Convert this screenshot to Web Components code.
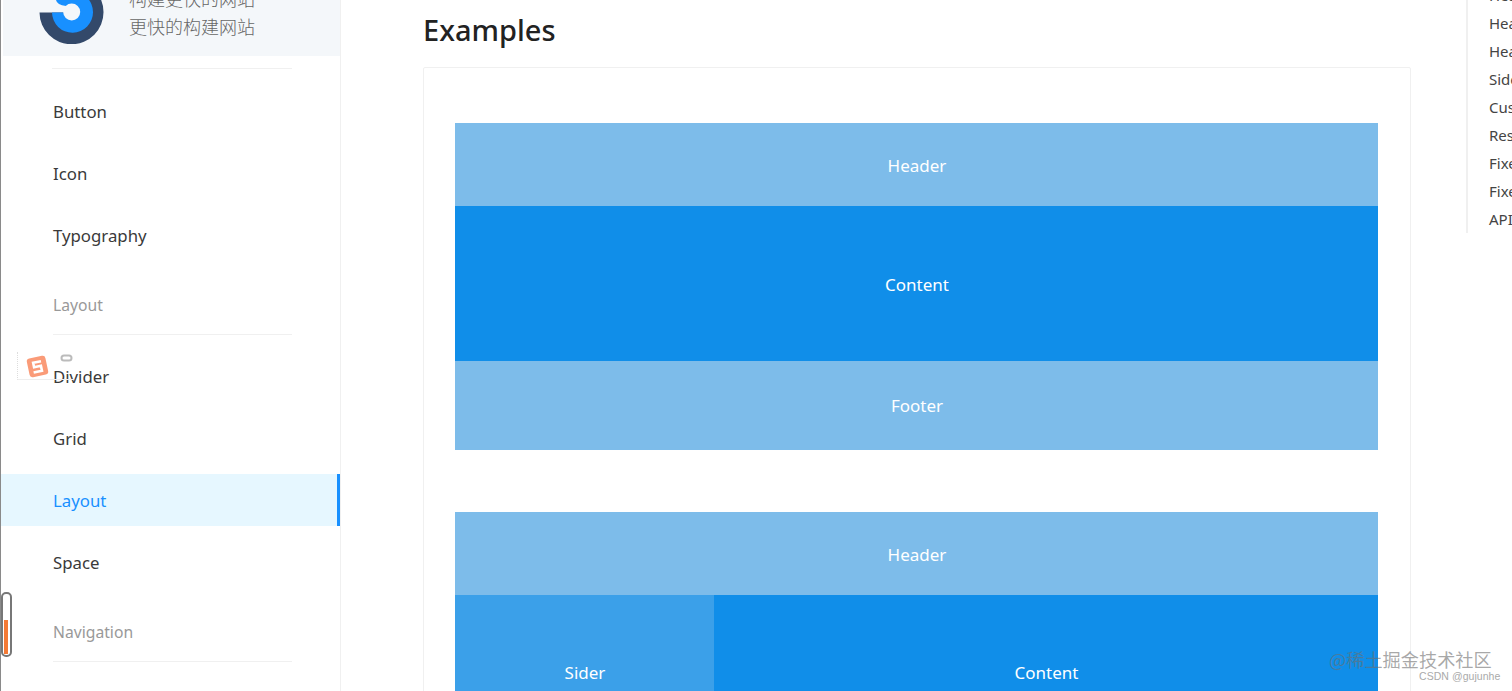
<!DOCTYPE html>
<html>
<head>
<meta charset="utf-8">
<title>Layout</title>
<style>
  html, body { margin: 0; height: 100%; overflow: hidden; background: #fff; }
  body { font-family: "Noto Sans", "Noto Sans CJK SC", sans-serif; }
</style>
</head>
<body>
<docs-page>
  <side-nav slot="nav">
    <nav-logo></nav-logo>
    <nav-item style="margin-top:17px">Button</nav-item>
    <nav-item>Icon</nav-item>
    <nav-item>Typography</nav-item>
    <nav-group>Layout</nav-group>
    <nav-item>Divider</nav-item>
    <nav-item>Grid</nav-item>
    <nav-item active>Layout</nav-item>
    <nav-item>Space</nav-item>
    <nav-group>Navigation</nav-group>
  </side-nav>
  <doc-main slot="main">
    <demo-layout>
      <demo-bar kind="light" h="83">Header</demo-bar>
      <demo-bar kind="dark" h="155">Content</demo-bar>
      <demo-bar kind="light" h="89" style="padding-top:0">Footer</demo-bar>
    </demo-layout>
    <demo-layout style="margin-top:62px">
      <demo-bar kind="light" h="83">Header</demo-bar>
      <demo-row>
        <demo-bar kind="mid" h="155" style="width:259px;padding-top:0">Sider</demo-bar>
        <demo-bar kind="dark" h="155" style="flex:1;padding-top:0">Content</demo-bar>
      </demo-row>
    </demo-layout>
  </doc-main>
  <anchor-rail slot="rail">
    <a-link>Header</a-link>
    <a-link>Header-Sider</a-link>
    <a-link>Header-Content</a-link>
    <a-link>Sider</a-link>
    <a-link>Custom</a-link>
    <a-link>Responsive</a-link>
    <a-link>Fixed</a-link>
    <a-link>Fixed-Sider</a-link>
    <a-link>API</a-link>
  </anchor-rail>
  <ime-widget slot="over"></ime-widget>
  <scroll-pill slot="over"></scroll-pill>
  <water-marks slot="over"></water-marks>
</docs-page>

<script>
function def(name, html, init) {
  customElements.define(name, class extends HTMLElement {
    constructor() {
      super();
      this.attachShadow({mode: 'open'});
      this.shadowRoot.innerHTML = html;
    }
    connectedCallback() { if (init) init(this); }
  });
}

def('docs-page', `
  <style>
    :host { display: block; position: relative; width: 1512px; height: 691px; overflow: hidden; }
    .row { display: flex; height: 100%; }
  </style>
  <div class="row">
    <slot name="nav"></slot>
    <slot name="main"></slot>
    <slot name="rail"></slot>
  </div>
  <slot name="over"></slot>
`);

def('side-nav', `
  <style>
    :host {
      display: block; box-sizing: border-box; width: 341px; height: 691px; flex: none;
      border-left: 1px solid #8a8a8a; border-right: 1px solid #f0f0f0;
      overflow: hidden;
    }
  </style>
  <slot></slot>
`);

def('nav-logo', `
  <style>
    :host { display: block; }
    .band {
      display: flex; height: 56px; margin-left: 2px; background: #f4f7fa; overflow: hidden;
    }
    svg { flex: none; margin: -24px 0 0 35px; }
    .txt {
      margin: -16px 0 0 23px; font-size: 18px; line-height: 28px; color: #666;
      font-family: "Noto Sans CJK SC", sans-serif; font-weight: 300;
    }
    hr { height: 1px; border: 0; margin: 12px 48px 0 51px; background: #f0f0f0; }
  </style>
  <div class="band">
    <svg width="68" height="68" viewBox="38 -24 68 68">
      <path d="M39.5 12.5 A32 32 0 0 0 103.5 12 A32 32 0 0 0 71.5 -20 V12.5 Z" fill="#33496a"/>
      <path d="M52 12.5 A20.5 20.5 0 0 0 93 12 A20.5 20.5 0 0 0 72.5 -8.5 H56 V0 Q57 5 66 6 V12.5 Z" fill="#1890ff"/>
      <circle cx="71.7" cy="12" r="8.5" fill="#f4f7fa"/>
    </svg>
    <div class="txt">构建更快的网站<br>更快的构建网站</div>
  </div>
  <hr>
`);

def('nav-item', `
  <style>
    :host {
      display: flex; align-items: center; box-sizing: border-box; height: 52px; margin-bottom: 10px;
      padding: 0 0 2px 52px; font-size: 16.8px; color: #3a3a3a; border-right: 3px solid transparent;
    }
    :host([active]) {
      margin: -1px 0 11px; padding-bottom: 0;
      background: #e6f7ff; color: #1890ff; border-right-color: #1890ff;
    }
  </style>
  <slot></slot>
`);

def('nav-group', `
  <style>
    :host {
      display: block; box-sizing: border-box; height: 63px; margin: 0 48px 16px 52px;
      padding-top: 22px; line-height: 22px; font-size: 15.7px; color: #999;
      border-bottom: 1px solid #f0f0f0;
    }
  </style>
  <slot></slot>
`);

def('doc-main', `
  <style>
    :host { display: block; width: 988px; flex: none; margin-left: 82px; }
    h2 { margin: 0; height: 67px; box-sizing: border-box; padding-top: 8px; line-height: 44px;
         font-size: 29px; font-weight: 500; color: #222; }
    .box { border: 1px solid #f0f0f0; border-radius: 2px; padding: 55px 32px 0 31px; height: 700px; }
  </style>
  <h2>Examples</h2>
  <div class="box"><slot></slot></div>
`);

def('demo-layout', `
  <style>:host { display: block; }</style>
  <slot></slot>
`);

def('demo-row', `
  <style>:host { display: flex; }</style>
  <slot></slot>
`);

def('demo-bar', `
  <style>
    :host {
      display: flex; align-items: center; justify-content: center; box-sizing: border-box;
      padding: 1px 0 0 1px; color: #fff; font-size: 17px; background: #108ee9;
    }
    :host([kind=light]) { background: #7dbcea; }
    :host([kind=mid]) { background: #3ba0e9; }
  </style>
  <slot></slot>
`, el => { el.style.height = el.getAttribute('h') + 'px'; });

def('anchor-rail', `
  <style>
    :host {
      display: block; box-sizing: border-box; flex: none; width: 200px; height: 263px;
      margin: -30px 0 0 55px; padding: 11px 0 0 21px; border-left: 2px solid #f0f0f0;
    }
  </style>
  <slot></slot>
`);

def('a-link', `
  <style>
    :host { display: block; height: 28px; line-height: 28px; font-size: 15px; color: #444; white-space: nowrap; }
  </style>
  <slot></slot>
`);

def('ime-widget', `
  <style>
    :host { position: absolute; left: 17px; top: 352px; width: 56px; height: 27px;
            border-left: 1px dotted #ddd; border-bottom: 1px solid #eee; }
    svg { position: absolute; left: 0; top: 0; }
  </style>
  <svg width="56" height="28" viewBox="0 0 56 28">
    <rect x="10" y="5" width="19" height="19" rx="3" fill="#fa9b78" transform="rotate(-12 19.5 14.5)"/>
    <path d="M24 10 H16 V14.5 H23 V19.5 H14.5" fill="none" stroke="#fff" stroke-width="2.6" transform="rotate(-12 19.5 14.5)"/>
    <rect x="43.5" y="3.5" width="10" height="5" rx="2.5" fill="none" stroke="#bbb" stroke-width="2"/>
  </svg>
`);

def('scroll-pill', `
  <style>
    :host { position: absolute; left: 1px; top: 592px; box-sizing: border-box; width: 11px; height: 65px;
            border: 2px solid #777; border-radius: 5px; background: #fff; padding: 26px 2px 1px 1px; }
    i { display: block; height: 100%; background: #f47a35; }
  </style>
  <i></i>
`);

def('water-marks', `
  <style>
    :host { position: absolute; inset: 0; pointer-events: none; }
    .a { position: absolute; left: 1329px; top: 646px; font-size: 18.2px; line-height: 26px;
         color: rgba(110,110,110,.6); font-family: "Noto Sans CJK SC", sans-serif; white-space: nowrap; }
    .b { position: absolute; left: 1419px; top: 669px; font-size: 10.5px; line-height: 14px; letter-spacing: .05px;
         color: #aaa; font-family: "Liberation Sans", sans-serif; white-space: nowrap; }
  </style>
  <div class="a">@稀土掘金技术社区</div>
  <div class="b">CSDN @gujunhe</div>
`);
</script>
</body>
</html>
